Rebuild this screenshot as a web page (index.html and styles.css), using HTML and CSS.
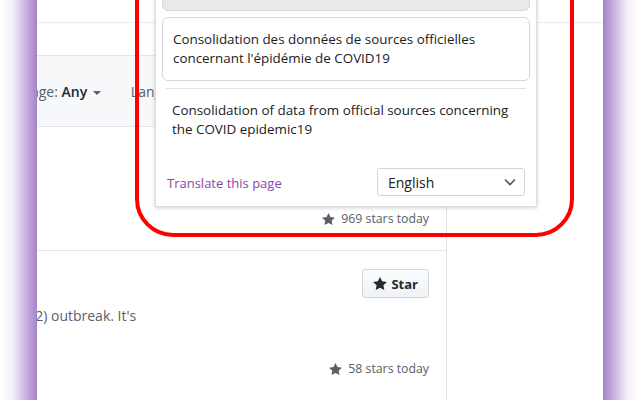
FILE: index.html
```html
<!DOCTYPE html>
<html>
<head>
<meta charset="utf-8">
<link rel="stylesheet" href="styles.css">
</head>
<body>
<div class="page">
  <div class="topbar"></div>
  <div class="main">
    <div class="box">
      <div class="filters">
        <span class="filter">Spoken Language: <b>Any</b> <i class="caret"></i></span>
        <span class="filter">Language: <b>Any</b> <i class="caret"></i></span>
      </div>
      <div class="row row1">
        <div class="meta">
          <span class="today"><svg class="star" viewBox="0 0 14 16" width="13" height="15"><path d="M14 6l-4.9-.64L7 1 4.9 5.36 0 6l3.6 3.26L2.67 14 7 11.67 11.33 14l-.93-4.74L14 6z"/></svg>969 stars today</span>
        </div>
      </div>
      <div class="row row2">
        <div class="row-head">
          <button class="btn-star"><svg class="star" viewBox="0 0 14 16" width="14" height="16"><path d="M14 6l-4.9-.64L7 1 4.9 5.36 0 6l3.6 3.26L2.67 14 7 11.67 11.33 14l-.93-4.74L14 6z"/></svg>Star</button>
        </div>
        <p class="desc">rus (SARS-CoV-2) outbreak. It's</p>
        <div class="meta">
          <span class="today"><svg class="star" viewBox="0 0 14 16" width="13" height="15"><path d="M14 6l-4.9-.64L7 1 4.9 5.36 0 6l3.6 3.26L2.67 14 7 11.67 11.33 14l-.93-4.74L14 6z"/></svg>58 stars today</span>
        </div>
      </div>
    </div>
    <div class="side"></div>
  </div>

  <div class="highlight"></div>

  <div class="popup">
    <div class="orig-box"></div>
    <div class="src-box">Consolidation des données de sources officielles concernant l'épidémie de COVID19</div>
    <div class="translated">
      <p>Consolidation of data from official sources concerning the COVID epidemic19</p>
    </div>
    <div class="popup-foot">
      <a class="translate-link">Translate this page</a>
      <div class="select"><span>English</span><svg width="12" height="8" viewBox="0 0 12 8"><path d="M1 1.5l5 5 5-5" fill="none" stroke="#555" stroke-width="1.6"/></svg></div>
    </div>
  </div>

  <div class="strip strip-left"></div>
  <div class="strip strip-right"></div>
</div>
</body>
</html>
```
FILE: styles.css
```css
html, body {
  margin: 0;
  padding: 0;
}
body {
  width: 640px;
  height: 400px;
  overflow: hidden;
  background: #fff;
  font-family: "Open Sans", "Noto Sans", sans-serif;
  color: #24292e;
}
.page {
  position: relative;
  width: 640px;
  height: 400px;
  overflow: hidden;
}
.topbar {
  height: 22px;
  border-bottom: 1px solid #eaecef;
}
.main {
  display: flex;
  margin-top: 32px;
}
.box {
  margin-left: -77px;
  width: 523px;
  flex: none;
  border-right: 1px solid #e1e4e8;
}
.filters {
  height: 70px;
  background: #f6f8fa;
  border-top: 1px solid #e1e4e8;
  border-bottom: 1px solid #e1e4e8;
  display: flex;
  align-items: center;
  padding-left: 16px;
  gap: 30px;
  font-size: 14px;
  color: #586069;
}
.filter b {
  color: #24292e;
  font-weight: 600;
}
.caret {
  display: inline-block;
  width: 0;
  height: 0;
  border-left: 4px solid transparent;
  border-right: 4px solid transparent;
  border-top: 4px solid #586069;
  vertical-align: middle;
  margin-left: 2px;
}
.row {
  padding: 0 17px 0 16px;
  border-bottom: 1px solid #e1e4e8;
  font-size: 12.3px;
  color: #586069;
}
.row1 {
  height: 123px;
  display: flex;
  flex-direction: column;
  justify-content: flex-end;
}
.row1 .meta {
  margin-bottom: 21px;
}
.meta {
  display: flex;
  justify-content: flex-end;
  line-height: 20px;
}
.today {
  display: inline-flex;
  align-items: center;
  gap: 6px;
}
.star {
  fill: #586069;
}
.row2 {
  padding-top: 18px;
  height: 200px;
}
.row-head {
  display: flex;
  justify-content: flex-end;
}
.btn-star {
  display: inline-flex;
  align-items: center;
  gap: 4px;
  height: 29px;
  padding: 0 10px;
  border: 1px solid #d1d5da;
  border-radius: 3px;
  background: linear-gradient(#fafbfc, #eff3f6);
  font-family: inherit;
  font-size: 13px;
  font-weight: 700;
  color: #24292e;
}
.btn-star .star {
  fill: #24292e;
}
.desc {
  margin: 8px 0 0;
  font-size: 14px;
  line-height: 20px;
  color: #586069;
}
.row2 .meta {
  margin-top: 33px;
}
.side {
  flex: 1;
}
.highlight {
  position: absolute;
  left: 135px;
  top: -60px;
  width: 431px;
  height: 289px;
  border: 4px solid #ff0000;
  border-radius: 38px;
}
.popup {
  position: absolute;
  left: 155px;
  top: -40px;
  width: 368px;
  padding: 6px 6px 10px;
  background: #fff;
  border: 1px solid #dcdcdc;
  box-shadow: 0 1px 4px rgba(0,0,0,0.18);
  font-size: 13.4px;
  color: #202124;
}
.orig-box {
  height: 44px;
  background: #e9e9eb;
  border: 1px solid #d6d6d8;
  border-radius: 6px;
  box-sizing: border-box;
}
.src-box {
  margin-top: 6px;
  height: 64px;
  box-sizing: border-box;
  padding: 12px 10px;
  border: 1px solid #d6d6d6;
  border-radius: 6px;
  line-height: 19px;
}
.translated {
  margin: 7px 4px 0;
  border-top: 1px solid #e3e3e3;
  padding: 12px 6px 0;
}
.translated p {
  margin: 0;
  line-height: 19px;
}
.popup-foot {
  margin-top: 29px;
  display: flex;
  align-items: center;
  justify-content: space-between;
  padding: 0 5px;
}
.translate-link {
  color: #8e44ad;
  font-size: 13px;
  line-height: 18px;
  padding-top: 2px;
}
.select {
  width: 148px;
  height: 28px;
  box-sizing: border-box;
  border: 1px solid #d4d4d4;
  border-radius: 3px;
  display: flex;
  align-items: center;
  justify-content: space-between;
  padding: 0 8px 0 10px;
  font-size: 14px;
}
.strip {
  position: absolute;
  top: 0;
  width: 37px;
  height: 400px;
}
.strip-left {
  left: 0;
  background: linear-gradient(to right, #ffffff 0%, #f3eef8 35%, #c9b3df 70%, #a682c8 100%);
}
.strip-right {
  right: 0;
  background: linear-gradient(to left, #ffffff 0%, #f3eef8 35%, #c9b3df 70%, #a682c8 100%);
}
```
